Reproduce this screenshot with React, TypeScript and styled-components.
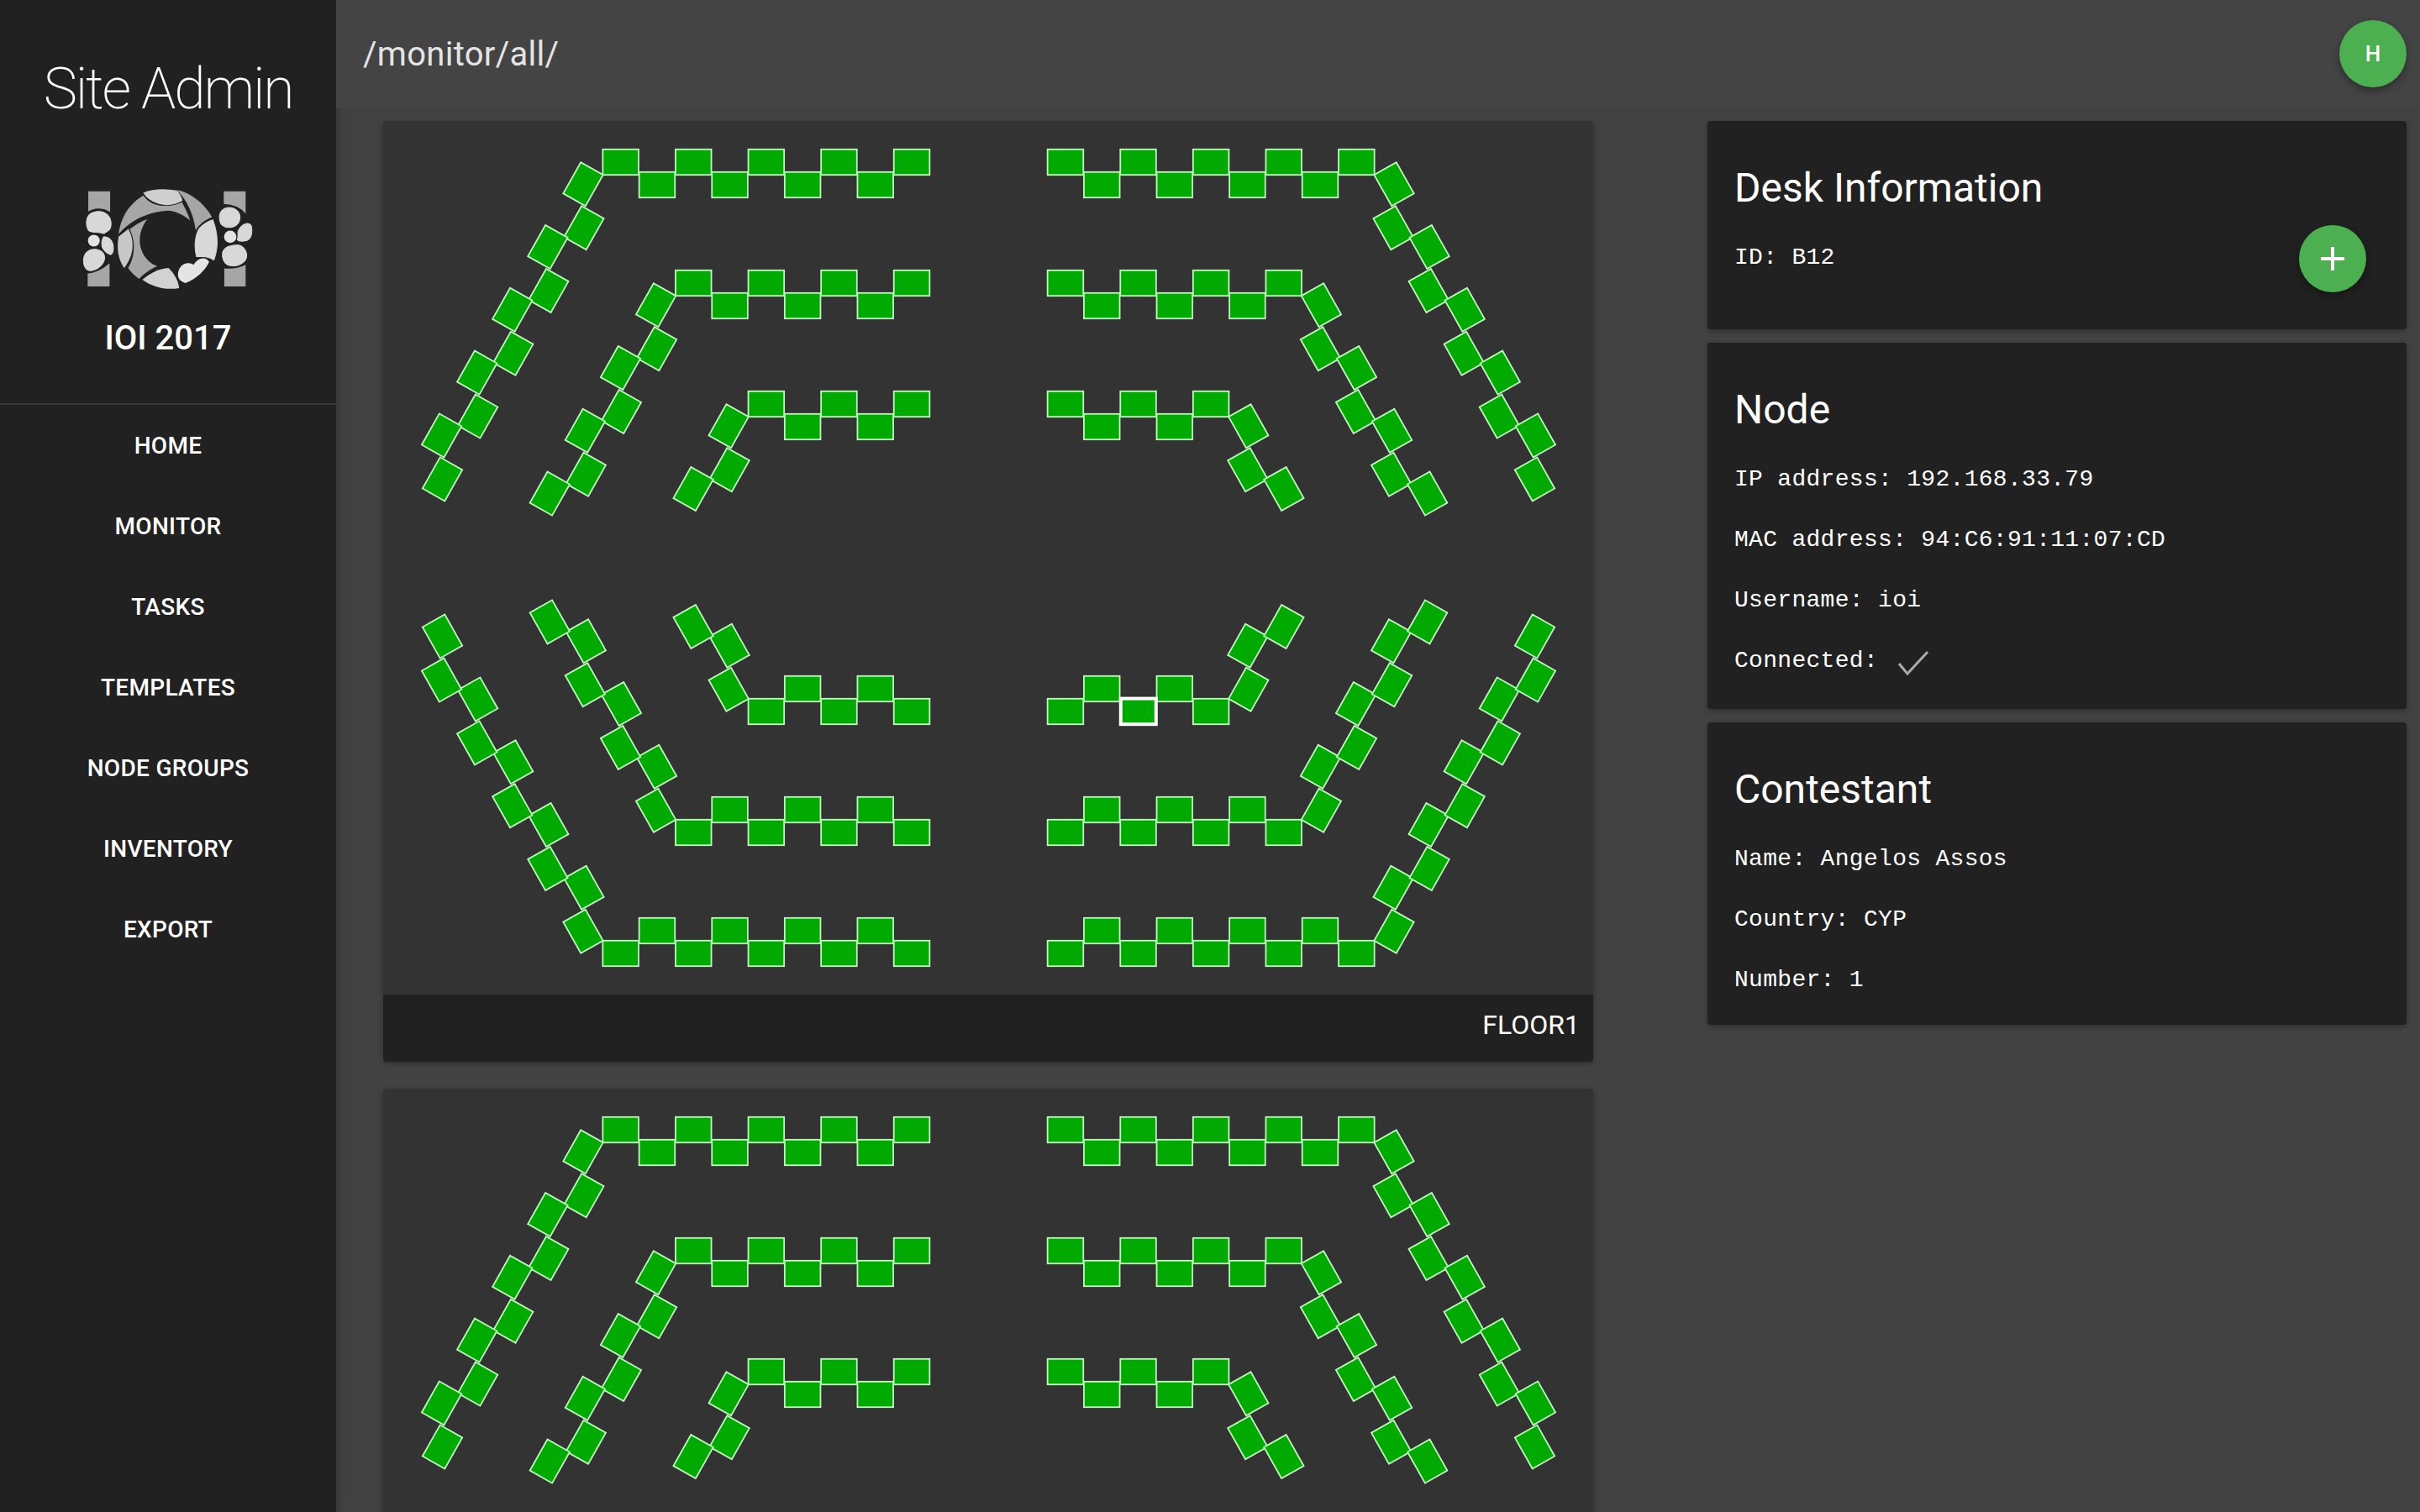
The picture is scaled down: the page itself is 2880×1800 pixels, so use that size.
import styled, { createGlobalStyle } from 'styled-components';

const GlobalStyle = createGlobalStyle`
  html, body {
    margin: 0;
    height: 100%;
    background: #424242;
    font-family: Roboto, sans-serif;
    overflow: hidden;
  }
`;

const Page = styled.div`
  display: flex;
  height: 1800px;
  overflow: hidden;
  color: #fff;
`;

const Sidebar = styled.aside`
  flex: 0 0 400px;
  display: flex;
  flex-direction: column;
  background: #212121;
  box-shadow: 0 0 12px rgba(0, 0, 0, 0.35);
  z-index: 2;
`;

const Brand = styled.div`
  display: flex;
  flex-direction: column;
  align-items: center;
  height: 480px;
  border-bottom: 2px solid #363636;
`;

const SiteTitle = styled.h1`
  margin: 64px 0 0;
  font-size: 68px;
  line-height: 84px;
  font-weight: 200;
  letter-spacing: -2.2px;
`;

const Logo = styled.svg`
  width: 207px;
  height: 127px;
  margin-top: 72px;
`;

const Edition = styled.div`
  margin-top: 32px;
  font-size: 40px;
  line-height: 48px;
  font-weight: 500;
`;

const Nav = styled.nav`
  display: flex;
  flex-direction: column;
`;

const NavItem = styled.a`
  display: flex;
  align-items: center;
  justify-content: center;
  height: 96px;
  font-size: 28px;
  font-weight: 500;
  letter-spacing: 0.3px;
  text-transform: uppercase;
`;

const Main = styled.main`
  flex: 1;
  display: flex;
  flex-direction: column;
  min-width: 0;
`;

const TopBar = styled.header`
  position: relative;
  z-index: 3;
  flex: 0 0 128px;
  display: flex;
  align-items: center;
  justify-content: space-between;
  box-sizing: border-box;
  padding: 0 16px 0 32px;
  background: #444;
`;

const Path = styled.div`
  font-size: 40px;
  font-weight: 400;
  letter-spacing: 0.3px;
  color: #e4e4e4;
`;

const Avatar = styled.div`
  display: flex;
  align-items: center;
  justify-content: center;
  width: 80px;
  height: 80px;
  border-radius: 50%;
  background: #4caf50;
  font-size: 26px;
  font-weight: 500;
  box-shadow: 0 4px 10px rgba(0, 0, 0, 0.35);
`;

const Content = styled.div`
  display: grid;
  grid-template-columns: 1440px 832px;
  column-gap: 136px;
  align-items: start;
  padding: 16px 0 0 56px;
`;

const FloorList = styled.div`
  display: flex;
  flex-direction: column;
  gap: 32px;
`;

const FloorCard = styled.section`
  background: #333;
  border-radius: 4px;
  overflow: hidden;
  box-shadow: 0 2px 6px rgba(0, 0, 0, 0.3);
`;

const FloorPlan = styled.svg`
  display: block;
  width: 1440px;
  height: 1040px;
`;

const Seat = styled.rect<{ $selected?: boolean }>`
  fill: #00aa00;
  stroke: ${(p) => (p.$selected ? '#fff' : '#c0f8c0')};
  stroke-width: ${(p) => (p.$selected ? 4 : 1.8)}px;
`;

const FloorLabel = styled.footer`
  height: 80px;
  box-sizing: border-box;
  padding: 12px 16px 0 0;
  background: #212121;
  font-size: 32px;
  line-height: 48px;
  font-weight: 400;
  text-align: right;
`;

const InfoColumn = styled.div`
  display: flex;
  flex-direction: column;
  gap: 16px;
`;

const InfoCard = styled.section<{ $height: number }>`
  height: ${(p) => p.$height}px;
  box-sizing: border-box;
  padding: 52px 32px 0;
  background: #212121;
  border-radius: 4px;
  box-shadow: 0 2px 6px rgba(0, 0, 0, 0.3);
`;

const CardTitle = styled.h2`
  margin: 0;
  font-size: 48px;
  line-height: 56px;
  font-weight: 400;
`;

const FieldList = styled.div`
  display: flex;
  flex-direction: column;
  margin-top: 18px;
`;

const Field = styled.div`
  display: flex;
  align-items: center;
  height: 72px;
  font-family: 'Liberation Mono', monospace;
  font-size: 28px;
  letter-spacing: 0.3px;
  white-space: pre;
`;

const DeskField = styled(Field)`
  margin-top: 2px;
`;

const DeskRow = styled.div`
  display: flex;
  align-items: flex-start;
  justify-content: space-between;
  padding-right: 16px;
  margin-top: 16px;
`;

const AddButton = styled.button`
  display: flex;
  align-items: center;
  justify-content: center;
  width: 80px;
  height: 80px;
  padding: 0;
  border: 0;
  border-radius: 50%;
  background: #4caf50;
  box-shadow: 0 4px 10px rgba(0, 0, 0, 0.35);
`;

const CheckIcon = styled.svg`
  width: 36px;
  height: 30px;
  margin-left: 24px;
  margin-top: 6px;
`;

const NAV_ITEMS = ['Home', 'Monitor', 'Tasks', 'Templates', 'Node groups', 'Inventory', 'Export'];

const CELL_W = 43.3;
const CELL_H = 32;
const ROW_COUNTS = [9, 7, 5];
const DIAGONAL_COUNTS = [10, 7, 3];

type SeatShape = { x: number; y: number; rotate?: number; cx?: number; cy?: number };

// one quarter of the floor, measured from the middle of the plan
function quarterSeats(): SeatShape[] {
  const seats: SeatShape[] = [];
  ROW_COUNTS.forEach((count, r) => {
    for (let i = 0; i < count; i++) {
      seats.push({ x: -112.6 - i * CELL_W, y: -487 + 144 * r + (i % 2 ? 27 : 0) });
    }
  });
  DIAGONAL_COUNTS.forEach((count, r) => {
    for (let i = 0; i < count; i++) {
      const j = Math.floor(i / 2);
      const odd = i % 2;
      const cx = -482 + 86.6 * r - 42.1 * j + odd * 0.9;
      const cy = -444.8 + 144 * r + 74.8 * j + odd * 52;
      seats.push({ x: cx - CELL_W / 2, y: cy - CELL_H / 2, rotate: -60.6, cx, cy });
    }
  });
  return seats;
}

const SEATS = quarterSeats();

// [centre x, mirror x, mirror y]
const QUARTERS = [
  [720, 1, 1],
  [721, -1, 1],
  [720, 1, -1],
  [721, -1, -1],
];

function Plan({ selected }: { selected?: boolean }) {
  return (
    <FloorPlan viewBox="0 0 1440 1040">
      {QUARTERS.map(([cx, sx, sy]) => (
        <g key={`${sx}${sy}`} transform={`translate(${cx} 520) scale(${sx} ${sy})`}>
          {SEATS.map((s, i) => (
            <Seat
              key={i}
              x={s.x + 0.35}
              y={s.y + 0.8}
              width={42.6}
              height={30.4}
              transform={s.rotate ? `rotate(${s.rotate} ${s.cx} ${s.cy})` : undefined}
            />
          ))}
        </g>
      ))}
      {selected && <Seat $selected x={877.8} y={687.6} width={42} height={30.6} />}
    </FloorPlan>
  );
}

function IoiLogo() {
  return (
    <Logo viewBox="80 60 620 380">
      <g fill="#a6a6a6">
        <path d="M104 83H182V157C170 148 150 143 130 145Q115 147 104 155Z" />
        <path d="M102 376Q140 374 180 340V422H102Z" />
        <path d="M587 83H665V163Q640 130 587 128Z" />
        <path d="M589 358Q630 362 665 345V422H589Z" />
        <path d="M212 236C220 170 255 125 300 98C320 125 345 135 380 135C405 135 425 128 438 122C450 145 460 165 467 186C440 165 410 152 385 152C320 158 260 180 212 236Z" />
        <path d="M420 78C475 90 520 130 545 175C520 185 500 200 487 222C480 170 460 120 420 78Z" />
        <path d="M315 182C290 190 270 205 252 218C270 255 275 310 246 357C258 372 270 385 285 395C300 378 325 360 350 350C310 335 285 295 288 250C290 225 300 200 315 182Z" />
      </g>
      <g fill="#d8d8d8" stroke="#d8d8d8" strokeWidth="3">
        <path d="M98 190C100 165 120 152 145 155C170 158 188 175 185 205C184 225 170 225 160 234C140 226 120 232 108 225C100 218 97 205 98 190Z" />
        <path d="M87 330C87 305 105 288 130 290C150 292 165 305 162 325C158 345 135 365 110 366C95 365 87 350 87 330Z" />
        <path d="M160 245C175 245 190 255 193 275C196 295 190 312 180 308C165 302 150 285 152 268C153 258 155 250 160 245Z" />
        <path d="M572 170C575 145 600 135 625 145C645 155 650 175 640 195C630 210 610 215 592 210C577 205 570 190 572 170Z" />
        <path d="M638 225C650 200 675 190 685 205C690 225 688 250 670 258C655 262 640 262 635 255C640 245 636 235 638 225Z" />
        <path d="M583 300C590 280 615 272 640 275C660 280 672 300 668 320C660 345 625 355 600 345C585 335 580 318 583 300Z" />
        <path d="M548 185C565 230 570 280 552 328C540 320 520 315 505 316L490 316C480 280 485 240 500 215C515 200 530 190 548 185Z" />
      </g>
      <g fill="#e4e4e4">
        <circle cx="124" cy="259" r="21" />
        <circle cx="610" cy="245" r="22" />
        <path d="M425 370C430 345 455 330 480 345C490 325 520 310 535 335C520 365 490 395 450 410C430 405 420 390 425 370Z" />
      </g>
      <path fill="#cfcfcf" d="M300 88Q350 68 420 80Q435 95 440 117Q400 140 355 128Q315 115 300 88Z" />
      <path fill="#d2d2d2" d="M297 398C330 370 360 358 390 356C410 375 425 400 428 428C380 436 335 425 297 398Z" />
      <path fill="#c8c8c8" d="M212 245L247 217C270 260 268 310 232 357C210 325 205 285 212 245Z" />
    </Logo>
  );
}

export default function App() {
  return (
    <Page>
      <GlobalStyle />
      <Sidebar>
        <Brand>
          <SiteTitle>Site Admin</SiteTitle>
          <IoiLogo />
          <Edition>IOI 2017</Edition>
        </Brand>
        <Nav>
          {NAV_ITEMS.map((item) => (
            <NavItem key={item}>{item}</NavItem>
          ))}
        </Nav>
      </Sidebar>
      <Main>
        <TopBar>
          <Path>/monitor/all/</Path>
          <Avatar>H</Avatar>
        </TopBar>
        <Content>
          <FloorList>
            <FloorCard>
              <Plan selected />
              <FloorLabel>FLOOR1</FloorLabel>
            </FloorCard>
            <FloorCard>
              <Plan />
            </FloorCard>
          </FloorList>
          <InfoColumn>
            <InfoCard $height={248}>
              <CardTitle>Desk Information</CardTitle>
              <DeskRow>
                <DeskField>ID: B12</DeskField>
                <AddButton aria-label="Add">
                  <svg width="32" height="32" viewBox="0 0 32 32">
                    <path d="M16 2V30M2 16H30" stroke="#fff" strokeWidth="4" />
                  </svg>
                </AddButton>
              </DeskRow>
            </InfoCard>
            <InfoCard $height={436}>
              <CardTitle>Node</CardTitle>
              <FieldList>
                <Field>IP address: 192.168.33.79</Field>
                <Field>MAC address: 94:C6:91:11:07:CD</Field>
                <Field>Username: ioi</Field>
                <Field>
                  Connected:
                  <CheckIcon viewBox="0 0 36 30">
                    <path d="M1 16L11 28L35 2" fill="none" stroke="#aaa" strokeWidth="3" />
                  </CheckIcon>
                </Field>
              </FieldList>
            </InfoCard>
            <InfoCard $height={360}>
              <CardTitle>Contestant</CardTitle>
              <FieldList>
                <Field>Name: Angelos Assos</Field>
                <Field>Country: CYP</Field>
                <Field>Number: 1</Field>
              </FieldList>
            </InfoCard>
          </InfoColumn>
        </Content>
      </Main>
    </Page>
  );
}
